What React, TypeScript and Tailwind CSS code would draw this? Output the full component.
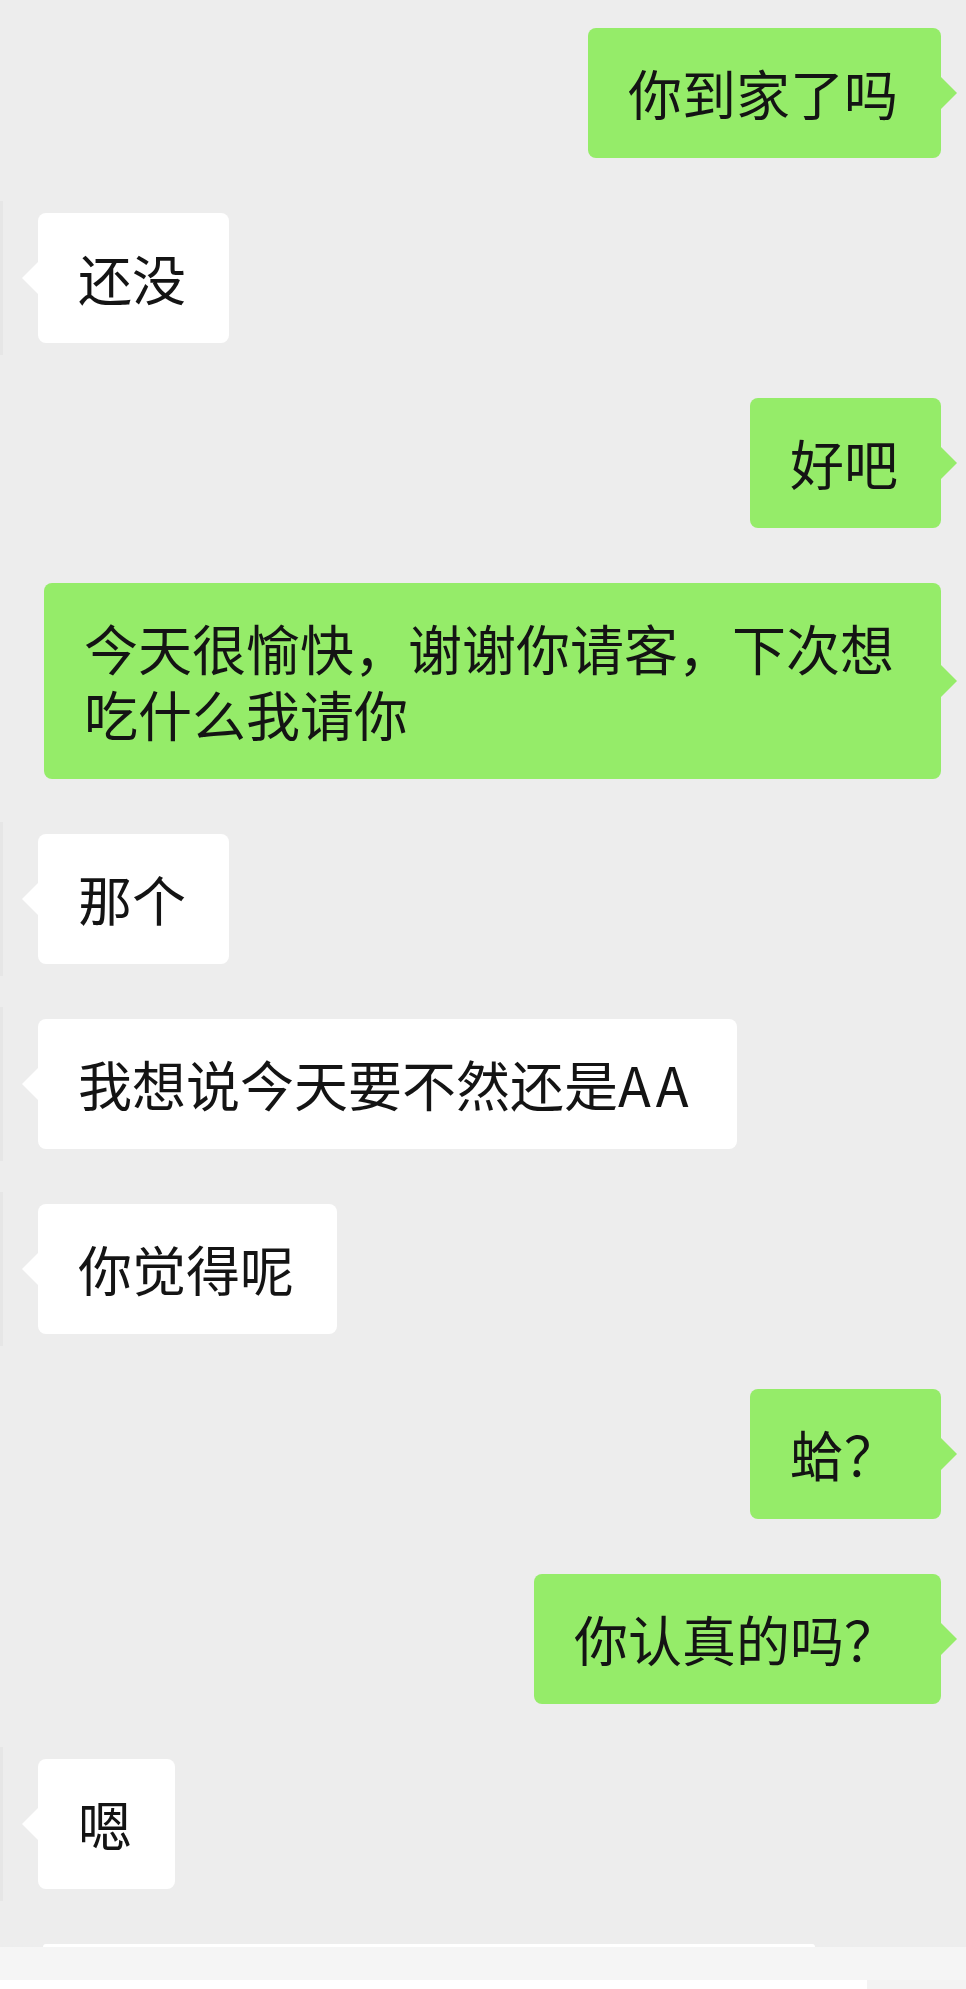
import React from 'react';

type Message = {
  from: 'me' | 'them';
  text: string;
};

const messages: Message[] = [
  { from: 'me', text: '你到家了吗' },
  { from: 'them', text: '还没' },
  { from: 'me', text: '好吧' },
  { from: 'me', text: '今天很愉快，谢谢你请客，下次想吃什么我请你' },
  { from: 'them', text: '那个' },
  { from: 'them', text: '我想说今天要不然还是AA' },
  { from: 'them', text: '你觉得呢' },
  { from: 'me', text: '蛤？' },
  { from: 'me', text: '你认真的吗？' },
  { from: 'them', text: '嗯' },
];

const bubbleText =
  "pl-[40px] pr-[43px] py-[32px] text-[54px] leading-[66px] text-[#141414] font-['Noto_Sans_CJK_SC','Noto_Sans',sans-serif]";

// latin letters in the reference font run a bit wider than Noto's
const renderText = (text: string) =>
  text.split(/([A-Za-z]+)/).map((part, i) =>
    /^[A-Za-z]+$/.test(part) ? (
      <span key={i} className="tracking-[0.1em]">
        {part}
      </span>
    ) : (
      part
    )
  );

const SentBubble: React.FC<{ text: string }> = ({ text }) => (
  <div className="flex justify-end pr-[25px]">
    <div className={`relative max-w-[897px] rounded-[8px] bg-[#95ec69] ${bubbleText}`}>
      {renderText(text)}
      <span className="absolute right-[-16px] top-1/2 -translate-y-1/2 h-0 w-0 border-y-[17px] border-y-transparent border-l-[17px] border-l-[#95ec69]" />
    </div>
  </div>
);

const ReceivedBubble: React.FC<{ text: string }> = ({ text }) => (
  <div className="flex items-stretch">
    {/* edge of the cropped avatar */}
    <div className="-my-[12px] w-[3px] bg-[#e6e6e6]" />
    <div className={`relative ml-[35px] max-w-[897px] rounded-[8px] bg-white ${bubbleText}`}>
      {renderText(text)}
      <span className="absolute left-[-16px] top-1/2 -translate-y-1/2 h-0 w-0 border-y-[17px] border-y-transparent border-r-[17px] border-r-white" />
    </div>
  </div>
);

export default function App() {
  return (
    <div className="h-[1989px] w-full overflow-hidden bg-[#ededed]">
      <div className="flex flex-col gap-[55px] pt-[28px]">
        {messages.map((m, i) =>
          m.from === 'me' ? <SentBubble key={i} text={m.text} /> : <ReceivedBubble key={i} text={m.text} />
        )}
      </div>

      {/* top of the next incoming bubble, cut off by the input bar */}
      <div className="mt-[55px] ml-[43px] h-[3px] w-[772px] rounded-t-[4px] bg-white" />
      <div className="h-[33px] bg-[#f5f5f5]" />
      <div className="flex h-[10px]">
        <div className="w-[867px] bg-white" />
        <div className="flex-1 bg-[#f3f3f3]" />
      </div>
      <div className="h-[2px] bg-[#bdbdbd]" />
    </div>
  );
}
